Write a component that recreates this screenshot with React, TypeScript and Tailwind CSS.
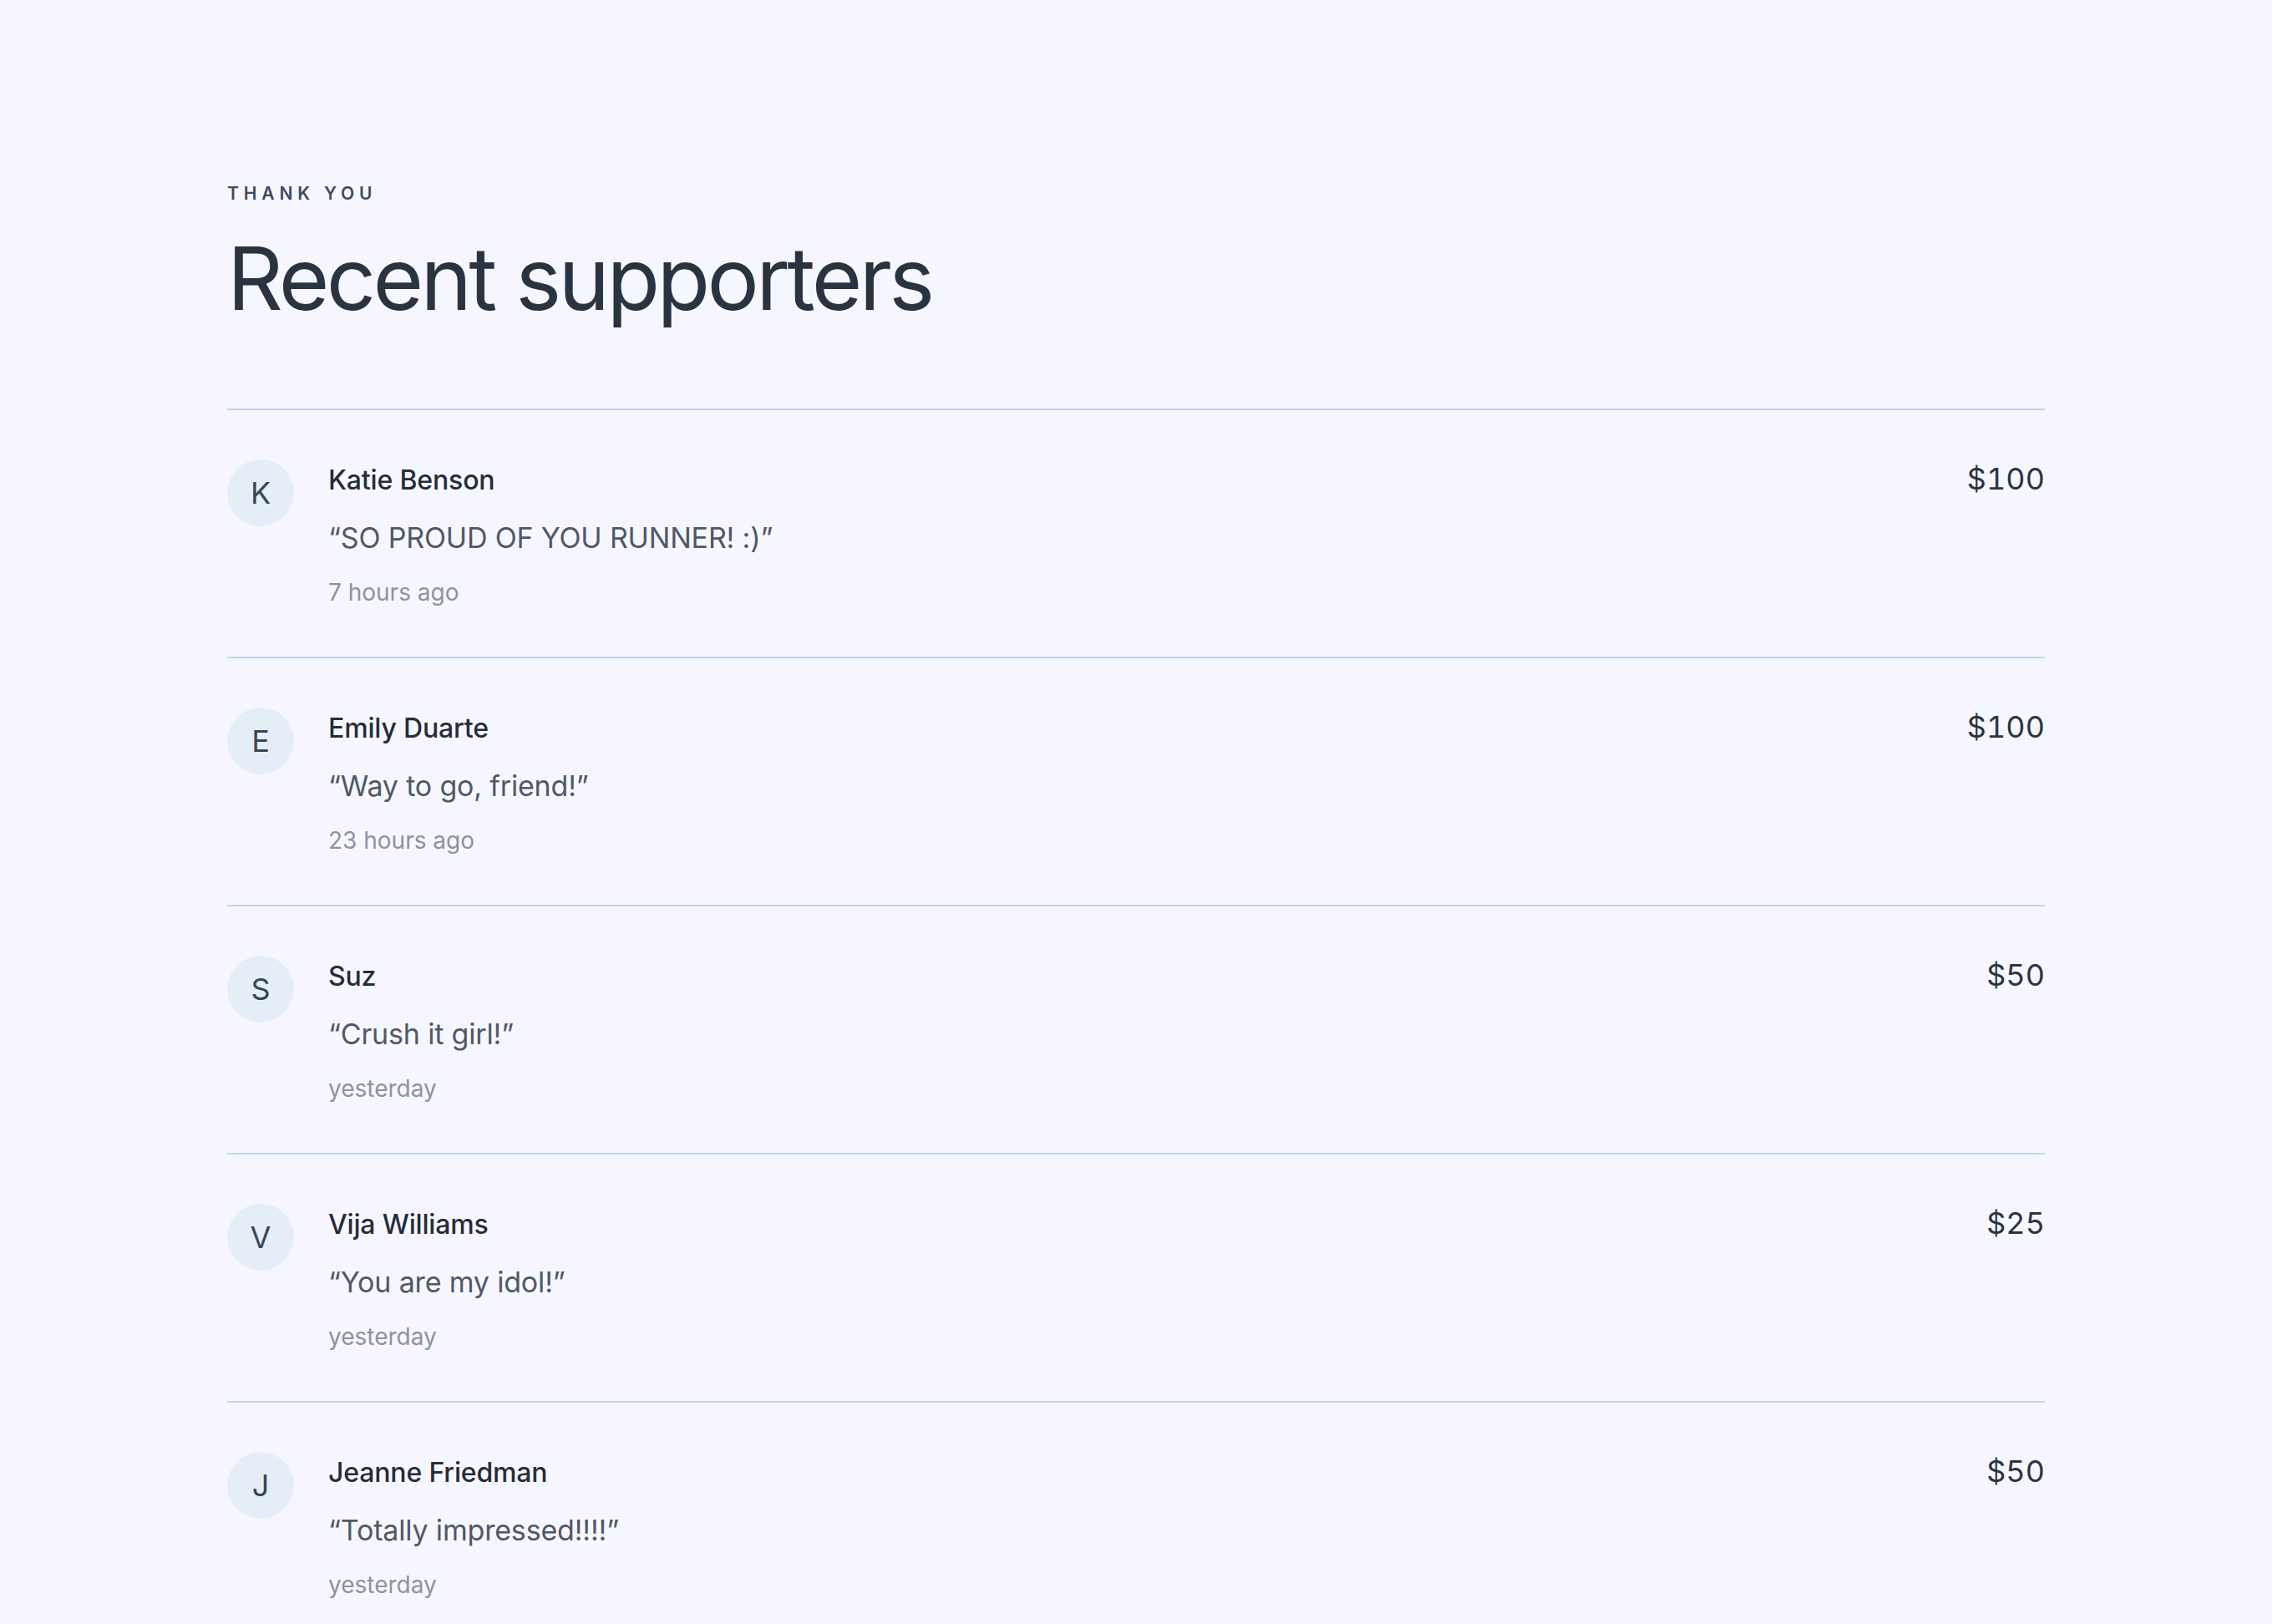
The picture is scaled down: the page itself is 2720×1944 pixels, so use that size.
import React from 'react';

interface Supporter {
  name: string;
  message: string;
  time: string;
  amount: string;
}

const supporters: Supporter[] = [
  { name: 'Katie Benson', message: 'SO PROUD OF YOU RUNNER! :)', time: '7 hours ago', amount: '$100' },
  { name: 'Emily Duarte', message: 'Way to go, friend!', time: '23 hours ago', amount: '$100' },
  { name: 'Suz', message: 'Crush it girl!', time: 'yesterday', amount: '$50' },
  { name: 'Vija Williams', message: 'You are my idol!', time: 'yesterday', amount: '$25' },
  { name: 'Jeanne Friedman', message: 'Totally impressed!!!!', time: 'yesterday', amount: '$50' },
];

// Single supporter row
const SupporterRow: React.FC<{ supporter: Supporter }> = ({ supporter }) => (
  <li className="flex items-start border-t-2 border-[#bdd4ea] pt-[60px] pb-[56px]">
    <div className="-mt-px flex h-[80px] w-[80px] shrink-0 items-center justify-center rounded-full bg-[#e5eef6] text-[36px] leading-none text-[#3a4555]">
      {supporter.name.charAt(0)}
    </div>
    <div className="ml-[41px] flex-1">
      <h3 className="text-[32px] font-medium leading-[1.5] tracking-[-0.005em] text-[#242d38]">{supporter.name}</h3>
      <p className="mt-[19px] text-[34px] leading-[1.5] tracking-[-0.005em] text-[#4f5966]">“{supporter.message}”</p>
      <p className="mt-[19px] text-[28px] leading-[1.5] text-[#8c939f]">{supporter.time}</p>
    </div>
    <div className="text-[36px] tabular-nums leading-[1.25] text-[#2c3541]">{supporter.amount}</div>
  </li>
);

export default function App() {
  return (
    <div className="min-h-screen overflow-hidden bg-[#f6f7fe] px-[272px] pt-[216px] font-['Inter',sans-serif]">
      <p className="text-[21px] font-semibold uppercase leading-[1.5] tracking-[0.28em] text-[#3c4a61]">Thank you</p>
      <h1 className="mt-[28px] text-[104px] font-normal leading-[1.1] tracking-[-0.035em] text-[#2a3440]">
        Recent supporters
      </h1>
      <ul className="mt-[99px]">
        {supporters.map((s) => (
          <SupporterRow key={s.name} supporter={s} />
        ))}
      </ul>
    </div>
  );
}
